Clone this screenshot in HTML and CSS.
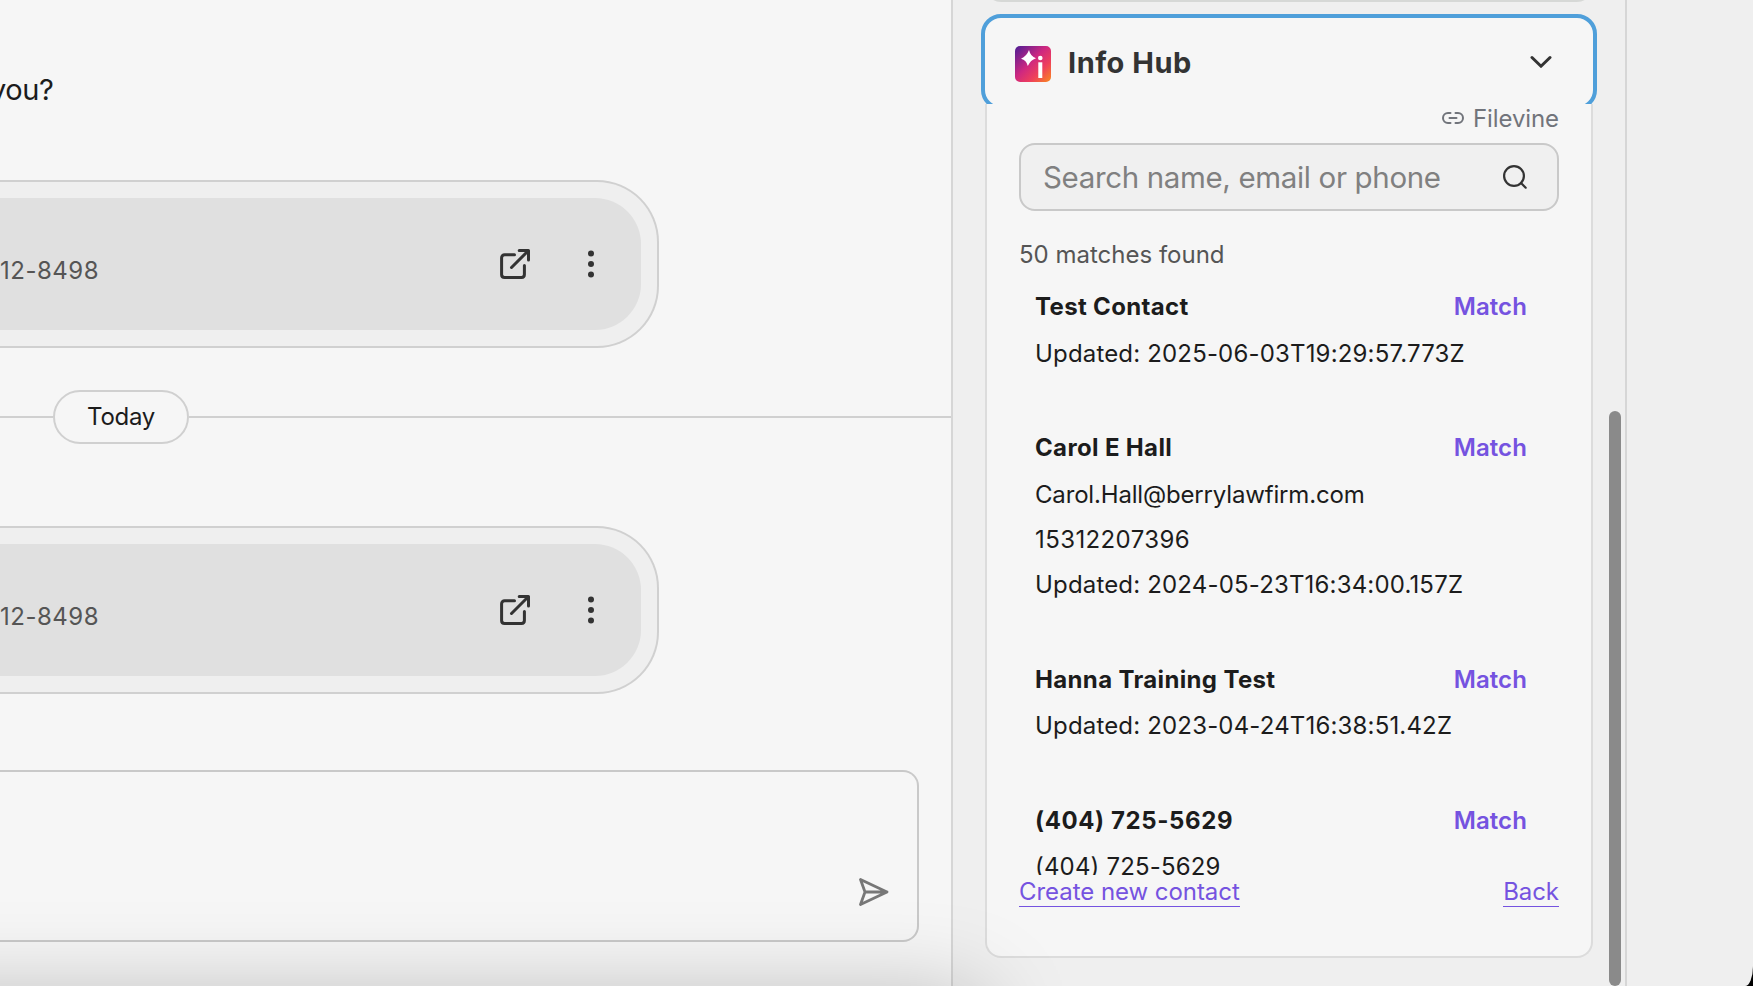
FILE: index.html
```html
<!DOCTYPE html>
<html lang="en">
<head>
  <meta charset="UTF-8" />
  <meta name="viewport" content="width=device-width, initial-scale=1.0"/>
  <title>Inbox - Info Hub</title>
  <link rel="stylesheet" href="styles.css">
</head>
<body>

  <div class="app">
    <!-- CONVERSATION -->
    <main class="chat">
      <p class="message">you?</p>

      <div class="bubble">
        <div class="call">
          <span class="call-number">12-8498</span>
          <svg class="icon-open" viewBox="0 0 30 30"><path d="M14.5 5.8H4.6A3 3 0 0 0 1.6 8.800V25.600A3 3 0 0 0 4.600 28.500H21.500A3 3 0 0 0 24.400 25.500V16.500M19.200 1.500H28.500V11M28 2L11.500 18.500"/></svg>
          <svg class="icon-more" viewBox="0 0 6 28"><circle cx="3" cy="3.500" r="3"/><circle cx="3" cy="14" r="3"/><circle cx="3" cy="24.500" r="3"/></svg>
        </div>
      </div>

      <div class="divider"><span class="day">Today</span></div>

      <div class="bubble">
        <div class="call">
          <span class="call-number">12-8498</span>
          <svg class="icon-open" viewBox="0 0 30 30"><path d="M14.5 5.8H4.6A3 3 0 0 0 1.6 8.800V25.600A3 3 0 0 0 4.600 28.500H21.500A3 3 0 0 0 24.400 25.500V16.500M19.200 1.500H28.500V11M28 2L11.500 18.500"/></svg>
          <svg class="icon-more" viewBox="0 0 6 28"><circle cx="3" cy="3.500" r="3"/><circle cx="3" cy="14" r="3"/><circle cx="3" cy="24.500" r="3"/></svg>
        </div>
      </div>

      <div class="composer">
        <svg class="icon-send" viewBox="0 0 30 28"><path d="M1.500 1.500L28 14L1.500 26.500L6 14ZM6 14H28"/></svg>
      </div>
    </main>

    <!-- SIDEBAR -->
    <aside class="sidebar">
      <div class="previous-card"></div>

      <section class="hub">
        <div class="hub-top">
          <header class="hub-header">
            <svg class="logo" viewBox="0 0 36 36">
              <defs>
                <linearGradient id="logoFill" x1="0" y1="0" x2="1" y2="1">
                  <stop offset="0" stop-color="#4c1d95"/>
                  <stop offset="0.450" stop-color="#cf2880"/>
                  <stop offset="0.700" stop-color="#ee3f5c"/>
                  <stop offset="1" stop-color="#f98a1e"/>
                </linearGradient>
              </defs>
              <rect width="36" height="36" rx="5" fill="url(#logoFill)"/>
              <path d="M14 4Q15.500 10.500 21 12.200Q15.500 14 12.800 20Q11.500 14 6 12.700Q11.500 10.500 14 4Z" fill="#fff"/>
              <circle cx="25.300" cy="12" r="2.300" fill="#fff"/>
              <rect x="23.300" y="16.300" width="4" height="15.700" fill="#fff"/>
            </svg>
            <h2 class="hub-title">Info Hub</h2>
            <svg class="icon-chevron" viewBox="0 0 22 14"><path d="M2 2.500L11 11.300L20 2.500"/></svg>
          </header>
        </div>

        <div class="hub-body">
          <div class="source">
            <svg class="icon-link" viewBox="0 0 22 12"><path d="M8.500 1H6A5 5 0 0 0 6 11H8.500M13.500 1H16A5 5 0 0 1 16 11H13.500M7.500 6H14.500"/></svg>
            <span>Filevine</span>
          </div>

          <div class="search">
            <input class="search-input" type="text" placeholder="Search name, email or phone" />
            <svg class="icon-search" viewBox="0 0 24 24"><circle cx="11" cy="11" r="9.900"/><path d="M18 18L22.700 22.700"/></svg>
          </div>

          <p class="count">50 matches found</p>

          <ul class="results">
            <li class="result">
              <div class="result-head"><strong>Test Contact</strong><a class="match">Match</a></div>
              <p class="updated">Updated: 2025-06-03T19:29:57.773Z</p>
            </li>
            <li class="result">
              <div class="result-head"><strong>Carol E Hall</strong><a class="match">Match</a></div>
              <p class="email">Carol.Hall@berrylawfirm.com</p>
              <p class="phone">15312207396</p>
              <p class="updated">Updated: 2024-05-23T16:34:00.157Z</p>
            </li>
            <li class="result">
              <div class="result-head"><strong>Hanna Training Test</strong><a class="match">Match</a></div>
              <p class="updated">Updated: 2023-04-24T16:38:51.42Z</p>
            </li>
            <li class="result">
              <div class="result-head"><strong class="number-name">(404) 725-5629</strong><a class="match">Match</a></div>
              <p class="updated">(404) 725-5629</p>
            </li>
          </ul>

          <div class="actions">
            <a class="link">Create new contact</a>
            <a class="link">Back</a>
          </div>
        </div>
      </section>

      <div class="scroll-thumb"></div>
    </aside>

    <div class="rail"></div>

    <div class="dock-shadow"></div>
  </div>

</body>
</html>
```
FILE: styles.css
```css
* {
  box-sizing: border-box;
}

body {
  margin: 0;
  height: 986px;
  background: #000;
  font-family: Inter, "Liberation Sans", sans-serif;
  font-size: 24px;
  color: #1c1c1c;
  overflow: hidden;
}

p, h2, ul {
  margin: 0;
  padding: 0;
}

svg {
  display: block;
  flex: none;
  fill: none;
  stroke-linecap: round;
  stroke-linejoin: round;
}

.app {
  position: relative;
  display: flex;
  width: 1753px;
  height: 986px;
  background: #efefef;
  border-bottom-right-radius: 8px 20px;
  overflow: hidden;
}

/* conversation */
.chat {
  width: 953px;
  height: 986px;
  padding-top: 70px;
  background: #f6f6f6;
  border-right: 2px solid #d6d6d6;
  display: flex;
  flex-direction: column;
}

.message {
  height: 110px;
  margin-left: -10px;
  font-size: 29px;
  line-height: 39px;
  letter-spacing: -0.4px;
}

.bubble {
  width: 659px;
  height: 168px;
  padding: 16px 16px 16px 0;
  background: #efefef;
  border: 2px solid #d0d0d0;
  border-left: none;
  border-radius: 0 62px 62px 0;
}

.call {
  height: 132px;
  display: flex;
  align-items: center;
  padding-right: 47px;
  background: #e0e0e0;
  border-radius: 0 46px 46px 0;
}

.call-number {
  flex: 1;
  padding-top: 12px;
  letter-spacing: 0.5px;
  color: #555;
}

.icon-open {
  width: 30px;
  height: 30px;
  stroke: #333;
  stroke-width: 3;
}

.icon-more {
  width: 6px;
  height: 28px;
  margin-left: 58px;
  fill: #333;
}

.divider {
  height: 54px;
  margin: 42px 0 82px;
  display: flex;
  align-items: center;
}

.divider::before,
.divider::after {
  content: "";
  width: 53px;
  height: 2px;
  background: #d0d0d0;
}

.divider::after {
  flex: 1;
}

.day {
  width: 136px;
  height: 54px;
  line-height: 50px;
  letter-spacing: -0.3px;
  text-align: center;
  border: 2px solid #d0d0d0;
  border-radius: 27px;
}

.composer {
  width: 919px;
  height: 172px;
  margin-top: 76px;
  padding: 0 28px 34px 0;
  border: 2px solid #c9c9c9;
  border-left: none;
  border-radius: 0 16px 16px 0;
  display: flex;
  justify-content: flex-end;
  align-items: flex-end;
}

.icon-send {
  width: 30px;
  height: 28px;
  stroke: #777;
  stroke-width: 2.8;
}

/* sidebar */
.sidebar {
  width: 674px;
  height: 986px;
  padding-left: 32px;
  border-right: 2px solid #d6d6d6;
}

.previous-card {
  width: 608px;
  height: 18px;
  margin-top: -16px;
  border: 2px solid #d6d8d6;
  border-radius: 0 0 16px 16px;
}

.hub {
  width: 608px;
  padding-top: 12px;
}

.hub-top {
  height: 90px;
  margin: 0 -4px;
  overflow: hidden;
}

.hub-header {
  height: 96px;
  padding: 0 41px 0 30px;
  display: flex;
  align-items: center;
  background: #f6f6f6;
  border: 4px solid #4f9fda;
  border-radius: 20px;
}

.logo {
  width: 36px;
  height: 36px;
  margin-top: 4px;
}

.hub-title {
  flex: 1;
  margin-left: 17px;
  font-size: 29px;
  font-weight: 700;
  letter-spacing: 0.5px;
  color: #333;
}

.icon-chevron {
  width: 22px;
  height: 14px;
  stroke: #333;
  stroke-width: 3;
}

.hub-body {
  height: 854px;
  padding: 0 32px;
  background: #f6f6f6;
  border: 2px solid #dcdcdc;
  border-top: none;
  border-radius: 0 0 16px 16px;
}

.source {
  height: 39px;
  display: flex;
  justify-content: flex-end;
  gap: 9px;
  line-height: 29px;
  letter-spacing: -0.1px;
  color: #71747b;
}

.icon-link {
  width: 22px;
  height: 12px;
  margin-top: 8px;
  stroke: #71747b;
  stroke-width: 2;
}

.search {
  height: 68px;
  padding: 0 30px 0 22px;
  display: flex;
  align-items: center;
  background: #f0f0f0;
  border: 2px solid #c9c9c9;
  border-radius: 16px;
}

.search-input {
  flex: 1;
  min-width: 0;
  padding: 0;
  border: none;
  outline: none;
  background: transparent;
  font-family: inherit;
  font-size: 29.5px;
  letter-spacing: -0.35px;
}

.search-input::placeholder {
  color: #808080;
}

.icon-search {
  width: 24px;
  height: 24px;
  margin-bottom: 1px;
  stroke: #333;
  stroke-width: 2.2;
}

.count {
  height: 73px;
  padding-top: 29px;
  line-height: 30px;
  color: #555;
}

.results {
  height: 591px;
  padding: 0 16px;
  overflow: hidden;
  list-style: none;
}

.result {
  padding-bottom: 49.8px;
}

.result p {
  line-height: 45px;
}

.updated {
  letter-spacing: 0.17px;
}

.email {
  letter-spacing: -0.17px;
}

.phone {
  letter-spacing: 0.4px;
}

.result-head {
  height: 46.5px;
  display: flex;
  justify-content: space-between;
  line-height: 45px;
}

.result-head strong {
  font-weight: 700;
  letter-spacing: 0.35px;
}

.result-head .number-name {
  letter-spacing: 0.6px;
}

.match {
  margin-right: 16px;
  font-weight: 600;
  letter-spacing: 0.1px;
  color: #7553e0;
}

.actions {
  display: flex;
  justify-content: space-between;
}

.link {
  height: 32px;
  line-height: 34px;
  letter-spacing: -0.05px;
  color: #7553e0;
  border-bottom: 1px solid #7553e0;
}

.scroll-thumb {
  position: absolute;
  left: 1609px;
  top: 411px;
  width: 12px;
  height: 575px;
  border-radius: 6px;
  background: #8a8a8a;
}

.rail {
  flex: 1;
}

/* soft shade rising from the bottom edge */
.dock-shadow {
  position: absolute;
  left: -200px;
  top: 996px;
  width: 1180px;
  height: 200px;
  box-shadow: 0 0 90px rgba(0, 0, 0, 0.25);
}
```
